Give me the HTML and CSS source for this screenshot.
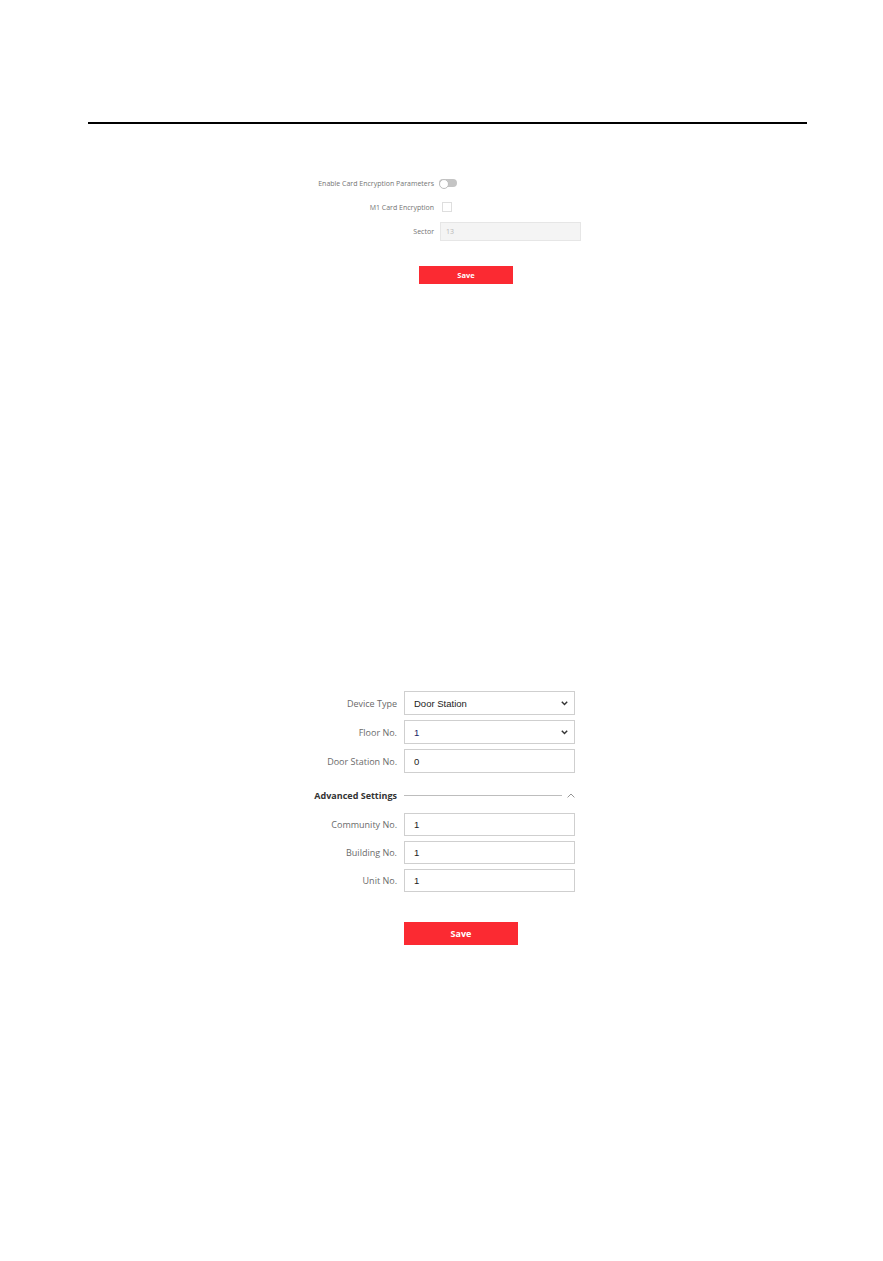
FILE: index.html
```html
<!DOCTYPE html>
<html>
<head>
<meta charset="utf-8">
<link rel="stylesheet" href="styles.css">
</head>
<body>
<div class="page">
  <div class="rule"></div>

  <div class="form-small">
    <div class="s-label">Enable Card Encryption Parameters</div>
    <div class="s-ctrl"><span class="toggle"><span class="knob"></span></span></div>
    <div class="s-label">M1 Card Encryption</div>
    <div class="s-ctrl"><span class="check"></span></div>
    <div class="s-label">Sector</div>
    <div class="s-ctrl"><div class="s-input">13</div></div>
  </div>
  <button class="save-small">Save</button>

  <div class="form-large">
    <div class="l-label">Device Type</div>
    <div class="l-box"><span>Door Station</span><svg class="caret" width="7" height="5" viewBox="0 0 7 5"><path d="M0.8 0.8 L3.5 3.6 L6.2 0.8" fill="none" stroke="#333" stroke-width="1.4"/></svg></div>
    <div class="l-label">Floor No.</div>
    <div class="l-box"><span class="navy">1</span><svg class="caret" width="7" height="5" viewBox="0 0 7 5"><path d="M0.8 0.8 L3.5 3.6 L6.2 0.8" fill="none" stroke="#333" stroke-width="1.4"/></svg></div>
    <div class="l-label">Door Station No.</div>
    <div class="l-box"><span>0</span></div>

    <div class="l-label adv">Advanced Settings</div>
    <div class="adv-ctrl"><span class="adv-line"></span><svg class="chev" width="8" height="5" viewBox="0 0 8 5"><path d="M0.6 4.4 L4 1 L7.4 4.4" fill="none" stroke="#888" stroke-width="0.9"/></svg></div>

    <div class="l-label">Community No.</div>
    <div class="l-box b2"><span>1</span></div>
    <div class="l-label">Building No.</div>
    <div class="l-box b2"><span>1</span></div>
    <div class="l-label">Unit No.</div>
    <div class="l-box b2"><span>1</span></div>
  </div>
  <button class="save-large">Save</button>
</div>
</body>
</html>
```

FILE: styles.css
```css
html, body {
  margin: 0;
  padding: 0;
  background: #fff;
}

.page {
  padding: 122px 0 0 88px;
  width: 719px;
}

.rule {
  height: 2px;
  background: #000;
  width: 719px;
}

/* Top small form */
.form-small {
  margin: 47px 0 0 196px;
  display: grid;
  grid-template-columns: 150px 200px;
  grid-auto-rows: 24px;
  column-gap: 6px;
  align-items: center;
  font-family: "Open Sans", "Noto Sans", sans-serif;
}

.s-label {
  text-align: right;
  font-size: 7px;
  color: #747474;
  white-space: nowrap;
}

.s-ctrl {
  display: flex;
  align-items: center;
}

.toggle {
  display: inline-block;
  position: relative;
  width: 18px;
  height: 8px;
  border-radius: 4px;
  background: #c4c4c4;
  margin-left: -1px;
}

.knob {
  position: absolute;
  left: 0;
  top: -0.5px;
  width: 8px;
  height: 8px;
  border-radius: 50%;
  background: #fff;
  border: 0.5px solid #bdbdbd;
}

.check {
  display: inline-block;
  width: 8px;
  height: 8px;
  border: 1px solid #dedede;
  background: #fff;
  margin-left: 2px;
}

.s-input {
  box-sizing: border-box;
  width: 141px;
  height: 19px;
  border: 1px solid #e6e6e6;
  background: #f4f4f4;
  font-size: 7px;
  color: #b8b8b8;
  line-height: 17px;
  padding-left: 5px;
}

.save-small {
  display: block;
  margin: 23px 0 0 331px;
  width: 94px;
  height: 18px;
  border: none;
  background: #fb2a32;
  color: #fff;
  font-family: "Open Sans", "Noto Sans", sans-serif;
  font-weight: 700;
  font-size: 7.5px;
  padding: 0;
}

/* Bottom form */
.form-large {
  margin: 407px 0 0 219px;
  display: grid;
  grid-template-columns: 90px 171px;
  column-gap: 7px;
  row-gap: 5px;
  align-items: center;
  font-family: "Open Sans", "Noto Sans", sans-serif;
}

.l-label {
  text-align: right;
  font-size: 9px;
  color: #6a6a6a;
  white-space: nowrap;
}

.l-box {
  box-sizing: border-box;
  height: 24px;
  border: 1px solid #cfcfcf;
  background: #fff;
  display: flex;
  align-items: center;
  justify-content: space-between;
  padding: 0 6px 0 9px;
  font-family: "Liberation Sans", Arial, sans-serif;
  font-size: 9.5px;
  color: #222;
}

.l-box.b2 {
  height: 23px;
}

.navy {
  color: #1c2566;
}

.caret {
  display: block;
}

.adv {
  font-weight: 700;
  color: #333;
  margin-top: 10px;
  margin-bottom: 6px;
}

.adv-ctrl {
  display: flex;
  align-items: center;
  margin-top: 10px;
  margin-bottom: 6px;
  height: 14px;
}

.adv-line {
  flex: 0 0 158px;
  height: 1px;
  background: #bdbdbd;
}

.chev {
  display: block;
  margin-left: 5px;
}

.save-large {
  display: block;
  margin: 30px 0 0 316px;
  width: 114px;
  height: 23px;
  border: none;
  background: #fb2a32;
  color: #fff;
  font-family: "Open Sans", "Noto Sans", sans-serif;
  font-weight: 700;
  font-size: 9px;
  padding: 0;
}
```
